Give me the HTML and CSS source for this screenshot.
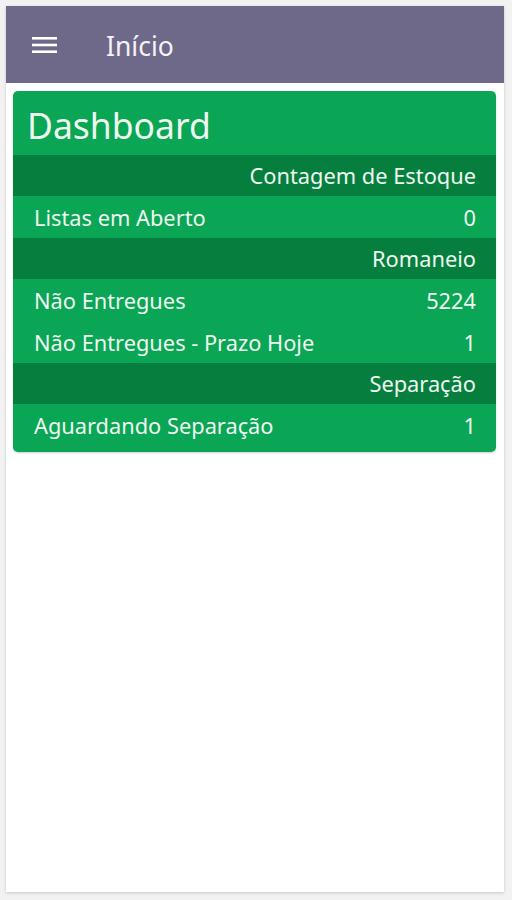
FILE: index.html
```html
<!DOCTYPE html>
<html lang="pt-BR">
<head>
  <meta charset="UTF-8">
  <meta name="viewport" content="width=device-width, initial-scale=1.0">
  <title>Início</title>
  <link rel="stylesheet" href="styles.css">
</head>
<body>
  <div class="app">
    <header class="toolbar">
      <button class="toolbar__menu" aria-label="Menu">
        <svg width="26" height="18" viewBox="0 0 26 18">
          <rect x="0" y="1" width="25" height="2.6" fill="#fff"/>
          <rect x="0" y="7.7" width="25" height="2.6" fill="#fff"/>
          <rect x="0" y="14.4" width="25" height="2.6" fill="#fff"/>
        </svg>
      </button>
      <h1 class="toolbar__title">Início</h1>
    </header>

    <main class="content">
      <section class="dashboard">
        <h2 class="dashboard__title">Dashboard</h2>

        <div class="dashboard__group">Contagem de Estoque</div>
        <div class="dashboard__row"><span>Listas em Aberto</span><span>0</span></div>

        <div class="dashboard__group">Romaneio</div>
        <div class="dashboard__row"><span>Não Entregues</span><span>5224</span></div>
        <div class="dashboard__row"><span>Não Entregues - Prazo Hoje</span><span>1</span></div>

        <div class="dashboard__group">Separação</div>
        <div class="dashboard__row"><span>Aguardando Separação</span><span>1</span></div>
      </section>
    </main>
  </div>
</body>
</html>
```

FILE: styles.css
```css
* {
  box-sizing: border-box;
}

body {
  margin: 0;
  padding: 6px 8px 8px 6px;
  background: #f2f2f2;
  font-family: "Noto Sans", Lato, sans-serif;
}

.app {
  height: 886px;
  background: #fff;
  box-shadow: 0 1px 3px rgba(0, 0, 0, 0.18);
  display: flex;
  flex-direction: column;
}

.toolbar {
  height: 77px;
  background: #6e6889;
  display: flex;
  align-items: center;
  padding: 0 0 0 26px;
  color: #fff;
}

.toolbar__menu {
  background: none;
  border: 0;
  padding: 0;
  width: 26px;
  height: 18px;
  display: flex;
}

.toolbar__title {
  margin: 3px 0 0 48px;
  font-size: 26.5px;
  font-weight: 400;
  color: #f4f2f8;
}

.content {
  padding: 8px 8px 0 7px;
}

.dashboard {
  background: #0aa555;
  border-radius: 5px;
  color: #eef8f0;
  padding-bottom: 6px;
  box-shadow: 0 1px 2px rgba(0, 0, 0, 0.2);
}

.dashboard__title {
  margin: 0;
  height: 64px;
  padding: 14px 0 0 14px;
  font-size: 35.5px;
  font-weight: 400;
  line-height: 40px;
}

.dashboard__group {
  background: #067f3e;
  height: 41px;
  display: flex;
  align-items: center;
  justify-content: flex-end;
  padding: 0 20px;
  font-size: 21.8px;
}

.dashboard__row {
  height: 42px;
  display: flex;
  align-items: center;
  justify-content: space-between;
  padding: 0 20px 0 21px;
  font-size: 21.8px;
}
```
